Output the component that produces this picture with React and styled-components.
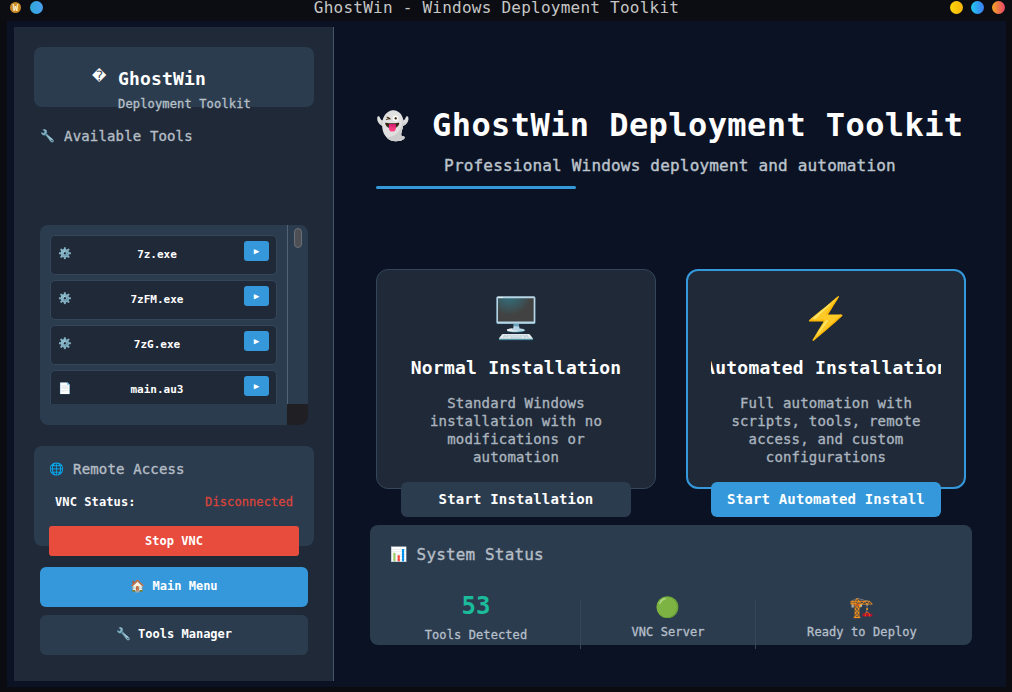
import React from "react";
import styled, { createGlobalStyle } from "styled-components";

const Global = createGlobalStyle`
  html, body { margin: 0; padding: 0; height: 692px; overflow: hidden; background: #0b0c11; }
  body { font-family: "DejaVu Sans Mono", "Liberation Mono", "Noto Color Emoji", monospace; }
  * { box-sizing: border-box; }
`;
const Window = styled.div`display:flex;flex-direction:column;width:1012px;height:692px;background:#0b0c11;`;
const TitleBar = styled.header`display:flex;align-items:center;justify-content:space-between;height:21px;padding:0 7px 6px 10px;background:#0c0d12;`;
const TitleText = styled.div`font-size:16px;letter-spacing:.24px;color:#c6c6c6;line-height:15px;`;
const DotGroup = styled.div`display:flex;align-items:center;gap:${p => p.$gap}px;`;
const Dot = styled.span`display:block;width:13px;height:13px;border-radius:50%;background:${p => p.$bg};`;
const Coin = styled.span`display:flex;align-items:center;justify-content:center;width:11px;height:11px;border-radius:50%;background:#c98a24;color:#fff3d0;font-size:9px;font-weight:700;`;
const Shell = styled.div`display:flex;width:999px;height:666px;margin-left:7px;padding:6px 0 6px 7px;background:#0a1224;`;

const Sidebar = styled.aside`display:flex;flex-direction:column;flex:none;width:320px;height:654px;padding:20px 19px 0 20px;background:#1f2938;border-right:1px solid #44566b;`;
const BrandCard = styled.div`display:flex;flex:none;height:60px;padding:22px 0 0 58px;background:#2c3c4f;border-radius:8px;`;
const BrandIcon = styled.span`flex:none;width:26px;font-family:"DejaVu Sans","Liberation Sans",sans-serif;font-size:14px;line-height:14px;color:#fff;`;
const BrandText = styled.div`display:flex;flex-direction:column;`;
const BrandName = styled.div`font-size:18px;line-height:20px;font-weight:700;color:#fff;letter-spacing:.16px;`;
const BrandSub = styled.div`font-size:12px;line-height:14px;margin-top:8px;color:#b8c0c8;-webkit-text-stroke:.3px #b8c0c8;letter-spacing:.16px;white-space:nowrap;`;
const SectionTitle = styled.div`display:flex;align-items:center;gap:9px;flex:none;height:20px;margin:${p => p.$m};font-size:${p => p.$size || 14}px;color:#b5bdc5;-webkit-text-stroke:.35px #b5bdc5;letter-spacing:.15px;white-space:nowrap;`;
const Emoji = styled.span`font-size:${p => p.$size || 12}px;line-height:1;font-weight:400;-webkit-text-stroke:0;`;
const ToolPanel = styled.section`display:grid;grid-template-columns:247px 21px;grid-template-rows:179px 21px;flex:none;width:268px;height:200px;margin:79px 0 0 6px;background:#2c3c4f;border-radius:8px;overflow:hidden;`;
const ToolViewport = styled.div`display:flex;flex-direction:column;gap:5px;padding:10px 0 0 10px;overflow:hidden;`;
const Track = styled.div`display:flex;justify-content:center;padding-top:3px;border-left:1px solid #50647a;`;
const Thumb = styled.div`width:8px;height:20px;border-radius:4px;background:#4d4f55;border:1px solid #6a7078;`;
const BelowList = styled.div``;
const Corner = styled.div`background:#1f1f24;`;
const ToolRow = styled.div`display:grid;grid-template-columns:28px 1fr 25px;flex:none;width:227px;height:40px;padding:5px 7px 0 7px;background:#1f2938;border:1px solid #34465a;border-radius:5px;`;
const ToolIcon = styled.span`font-size:11px;line-height:1;margin-top:7px;`;
const ToolName = styled.span`margin-top:7px;padding-right:16px;font-size:11px;line-height:14px;font-weight:700;color:#fff;text-align:center;`;
const RunButton = styled.button`width:25px;height:20px;padding:0;border:0;border-radius:3px;background:#3498db;color:#fff;font-size:9px;line-height:18px;font-family:inherit;`;
const RemotePanel = styled.section`flex:none;height:100px;margin-top:21px;padding:13px 15px 0;background:#2c3c4f;border-radius:8px;`;
const StatusRow = styled.div`display:flex;justify-content:space-between;margin-top:16px;padding:0 6px;font-size:12px;line-height:14px;font-weight:700;color:#fff;letter-spacing:.1px;`;
const StatusValue = styled.span`color:#d8443a;font-weight:400;-webkit-text-stroke:.3px #d8443a;`;
const StopButton = styled.button`display:block;width:250px;height:30px;margin-top:17px;padding:0 0 1px;border:0;border-radius:3px;background:#e74c3c;color:#fff;font:700 12px "DejaVu Sans Mono",monospace;`;
const NavButton = styled.button`flex:none;width:268px;height:40px;margin:${p => p.$m};padding:0 0 3px;border:0;border-radius:6px;background:${p => p.$bg};color:#fff;font:700 12px "DejaVu Sans Mono","Noto Color Emoji",monospace;`;

const Main = styled.main`display:flex;flex-direction:column;flex:1;padding:0 36px;min-width:0;`;
const Hero = styled.div`display:flex;justify-content:center;align-items:center;gap:22px;margin-top:78px;height:40px;`;
const HeroTitle = styled.h1`margin:0;font-size:32px;line-height:40px;font-weight:700;color:#fff;letter-spacing:.42px;white-space:nowrap;`;
const HeroSub = styled.p`margin:11px 0 0;font-size:16px;line-height:20px;font-weight:400;-webkit-text-stroke:.4px #bcc4cc;color:#bcc4cc;text-align:center;letter-spacing:.19px;`;
const Accent = styled.div`flex:none;width:200px;height:3px;margin:10px 0 0 6px;border-radius:2px;background:#3498db;`;
const Cards = styled.div`display:flex;gap:30px;margin:80px 0 0 6px;`;
const CardColumn = styled.div`display:flex;flex-direction:column;align-items:center;width:280px;`;
const Card = styled.article`display:flex;flex-direction:column;align-items:center;width:280px;height:220px;padding:${p => p.$primary ? "22px 23px 0" : "23px 24px 0"};background:#1f2938;border:${p => p.$primary ? "2px solid #3498db" : "1px solid #34465a"};border-radius:12px;`;
const CardIcon = styled.span`font-size:40px;line-height:50px;height:50px;`;
const CardTitle = styled.h2`display:flex;justify-content:center;width:230px;margin:13px 0 0;overflow:hidden;font-size:18px;line-height:24px;font-weight:700;color:#fff;letter-spacing:.25px;white-space:nowrap;`;
const CardDesc = styled.p`width:230px;margin:14px 0 0;font-size:14px;line-height:18px;font-weight:400;-webkit-text-stroke:.35px #aab4be;color:#aab4be;text-align:center;letter-spacing:.17px;`;
const CardButton = styled.button`flex:none;width:230px;height:35px;margin-top:-7px;padding:0 0 2px;position:relative;border:0;border-radius:6px;background:${p => p.$bg};color:#fff;font:700 14px "DejaVu Sans Mono",monospace;letter-spacing:.17px;`;
const StatusPanel = styled.section`flex:none;width:602px;height:120px;margin-top:8px;padding:19px 20px 0;background:#2c3c4f;border-radius:8px;`;
const StatsGrid = styled.div`display:grid;grid-template-columns:190px 175px 1fr;height:49px;margin:36px -20px 0 0;`;
const Stat = styled.div`display:flex;flex-direction:column;align-items:center;height:49px;padding-right:${p => p.$pr || 0}px;${p => p.$divided && "border-left:1px solid #34465a;"}`;
const StatNumber = styled.div`font-size:24px;line-height:28px;font-weight:700;color:#1abc9c;margin-top:-8px;`;
const StatEmoji = styled.span`font-size:20px;line-height:24px;height:24px;margin-top:-5px;`;
const StatLabel = styled.div`font-size:12px;line-height:14px;font-weight:400;-webkit-text-stroke:.3px #b5bfc9;color:#b5bfc9;letter-spacing:.1px;margin-top:${p => p.$m}px;white-space:nowrap;`;

const tools = [["⚙️", "7z.exe"], ["⚙️", "7zFM.exe"], ["⚙️", "7zG.exe"], ["📄", "main.au3"]];

export default function App() {
  return (
    <Window>
      <Global />
      <TitleBar>
        <DotGroup $gap={9}><Coin>W</Coin><Dot $bg="linear-gradient(90deg,#2ea8d8,#4a9ff0)" /></DotGroup>
        <TitleText>GhostWin - Windows Deployment Toolkit</TitleText>
        <DotGroup $gap={8}>
          <Dot $bg="linear-gradient(90deg,#ffd60a,#f5b50c)" />
          <Dot $bg="linear-gradient(90deg,#22c8f0,#3f7cf5)" />
          <Dot $bg="linear-gradient(90deg,#f5a623,#e8456a)" />
        </DotGroup>
      </TitleBar>
      <Shell>
        <Sidebar>
          <BrandCard>
            <BrandIcon>{"\uFFFD"}</BrandIcon>
            <BrandText>
              <BrandName>GhostWin</BrandName>
              <BrandSub>Deployment Toolkit</BrandSub>
            </BrandText>
          </BrandCard>
          <SectionTitle $m="19px 0 0 6px"><Emoji>🔧</Emoji>Available Tools</SectionTitle>
          <ToolPanel>
            <ToolViewport>
              {tools.map(([icon, name]) => (
                <ToolRow key={name}>
                  <ToolIcon>{icon}</ToolIcon>
                  <ToolName>{name}</ToolName>
                  <RunButton>▶</RunButton>
                </ToolRow>
              ))}
            </ToolViewport>
            <Track><Thumb /></Track>
            <BelowList />
            <Corner />
          </ToolPanel>
          <RemotePanel>
            <SectionTitle $m="0"><Emoji>🌐</Emoji>Remote Access</SectionTitle>
            <StatusRow><span>VNC Status:</span><StatusValue>Disconnected</StatusValue></StatusRow>
            <StopButton>Stop VNC</StopButton>
          </RemotePanel>
          <NavButton $bg="#3498db" $m="21px 0 0 6px">🏠 Main Menu</NavButton>
          <NavButton $bg="#2c3c4f" $m="8px 0 0 6px">🔧 Tools Manager</NavButton>
        </Sidebar>
        <Main>
          <Hero><Emoji $size={27}>👻</Emoji><HeroTitle>GhostWin Deployment Toolkit</HeroTitle></Hero>
          <HeroSub>Professional Windows deployment and automation</HeroSub>
          <Accent />
          <Cards>
            <CardColumn>
              <Card>
                <CardIcon>🖥️</CardIcon>
                <CardTitle><span>Normal Installation</span></CardTitle>
                <CardDesc>Standard Windows installation with no modifications or automation</CardDesc>
              </Card>
              <CardButton $bg="#2c3c4f">Start Installation</CardButton>
            </CardColumn>
            <CardColumn>
              <Card $primary>
                <CardIcon>{"\u26A1\uFE0F"}</CardIcon>
                <CardTitle><span>Automated Installation</span></CardTitle>
                <CardDesc>Full automation with scripts, tools, remote access, and custom configurations</CardDesc>
              </Card>
              <CardButton $bg="#3498db">Start Automated Install</CardButton>
            </CardColumn>
          </Cards>
          <StatusPanel>
            <SectionTitle $m="0" $size={16}><Emoji $size={14}>📊</Emoji>System Status</SectionTitle>
            <StatsGrid>
              <Stat $pr={18}><StatNumber>53</StatNumber><StatLabel $m={8}>Tools Detected</StatLabel></Stat>
              <Stat $divided><StatEmoji>🟢</StatEmoji><StatLabel $m={6}>VNC Server</StatLabel></Stat>
              <Stat $divided $pr={4}><StatEmoji>🏗️</StatEmoji><StatLabel $m={6}>Ready to Deploy</StatLabel></Stat>
            </StatsGrid>
          </StatusPanel>
        </Main>
      </Shell>
    </Window>
  );
}
